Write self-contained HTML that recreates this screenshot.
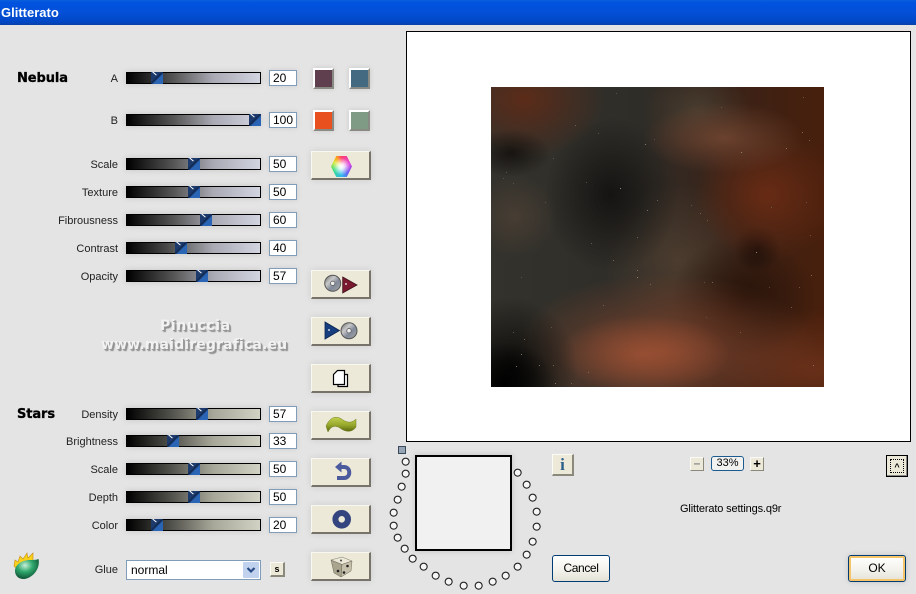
<!DOCTYPE html>
<html><head><meta charset="utf-8"><title>Glitterato</title>
<style>
html,body{margin:0;padding:0}
body{width:916px;height:594px;overflow:hidden;position:relative;background:#e4e4e4;font-family:"Liberation Sans",sans-serif;color:#000}
div{position:absolute;box-sizing:border-box}
.title{left:0;top:0;width:916px;height:25px;background:linear-gradient(#0a5fdc 0,#0052e0 3px,#0450d8 12px,#0047c4 22px,#0a3fa8 25px);color:#fff;font-weight:bold;font-size:13px;line-height:25px;padding-left:1px}
.l{width:110px;left:8px;text-align:right;font-size:11px;line-height:14px;height:14px;color:#222}
.h{left:17px;font-family:"DejaVu Sans",sans-serif;font-weight:bold;font-size:13px;line-height:16px;color:#000;letter-spacing:-.1px;-webkit-text-stroke:.3px #000}
.b{left:126px;width:135px;height:12px;border:1px solid #000;box-shadow:0 0 7px rgba(0,0,0,.13)}
.n{background:linear-gradient(90deg,#000 0,#555 35%,#a9aab4 65%,#d2d4e0 100%)}
.s{background:linear-gradient(90deg,#000 0,#565650 35%,#a8a89a 65%,#d2d2c4 100%)}
.t{top:-1px;width:12px;height:12px;background:linear-gradient(135deg,#1c3a6c 0,#1c3a6c 40%,#10264c 50%,#2a64b4 60%,#2a64b4 100%)}
.t:before{content:"";position:absolute;left:1px;top:1px;width:5px;height:1px;background:#fff;transform:rotate(40deg)}
.i{left:269px;width:28px;height:16px;background:#fff;border:1px solid #7f9db9;font-size:12px;line-height:15px;padding-left:3px;box-shadow:0 0 6px rgba(0,0,0,.1)}
.c{width:21px;height:21px;border:2px solid;border-color:#fff #8a8a84 #8a8a84 #fff;box-shadow:0 0 5px rgba(0,0,0,.12)}
.btn{left:311px;width:60px;height:29px;background:#ece9d8;border:1px solid;border-color:#f8f7f0 #77736a #77736a #f8f7f0;border-bottom-width:2px;border-right-width:2px;box-shadow:0 0 7px rgba(0,0,0,.1)}
.wm{color:#f2f2f2;font-family:"DejaVu Sans",sans-serif;font-weight:bold;white-space:nowrap;text-shadow:1px 1px 0 #9a9a9a,2px 2px 1px #8a8a8a}
.push{background:linear-gradient(#fff,#f2f1ea 60%,#e4e2d6);border:1px solid #003c74;border-radius:3px;font-size:11px;text-align:center;line-height:25px}
.sm{background:#ece9d8;border:1px solid;border-color:#fbfaf4 #8b887c #8b887c #fbfaf4;text-align:center}
.neb{left:491px;top:87px;width:333px;height:300px;overflow:hidden;background:
radial-gradient(ellipse 16% 14% at 4% 99%,rgba(0,0,0,1),rgba(0,0,0,0)),
radial-gradient(ellipse 20% 24% at 6% 94%,rgba(4,4,3,.85),rgba(4,4,3,0)),
radial-gradient(ellipse 26% 13% at 46% 89%,rgba(160,82,52,.8),rgba(160,80,48,0)),
radial-gradient(ellipse 46% 26% at 52% 88%,rgba(130,68,44,.9),rgba(120,62,40,0)),
radial-gradient(ellipse 24% 12% at 70% 17%,rgba(112,68,48,.9),rgba(100,60,40,0)),
radial-gradient(ellipse 22% 22% at 83% 36%,rgba(108,44,20,.9),rgba(100,40,20,0)),
radial-gradient(ellipse 7% 8% at 80% 54%,rgba(22,12,8,.8),rgba(20,10,6,0)),
radial-gradient(ellipse 22% 20% at 76% 70%,rgba(38,18,8,.9),rgba(36,18,10,0)),
radial-gradient(ellipse 20% 26% at 36% 36%,rgba(16,15,14,.85),rgba(14,13,12,0)),
radial-gradient(ellipse 13% 14% at 7% 43%,rgba(80,66,54,.7),rgba(80,60,48,0)),
radial-gradient(ellipse 12% 8% at 6% 22%,rgba(14,10,8,.75),rgba(14,10,8,0)),
radial-gradient(ellipse 24% 20% at 10% 4%,rgba(96,42,22,.9),rgba(80,36,20,0)),
radial-gradient(ellipse 22% 26% at 56% 58%,rgba(78,62,48,.9),rgba(70,56,44,0)),
radial-gradient(ellipse 16% 14% at 62% 8%,rgba(76,66,52,.8),rgba(70,60,48,0)),
radial-gradient(ellipse 28% 20% at 97% 94%,rgba(110,50,26,.85),rgba(100,46,24,0)),
linear-gradient(90deg,#33322c 0,#2f2d28 45%,#3a2217 72%,#481f0c 100%)}
.st{left:0;top:0;width:1px;height:1px;background:transparent;box-shadow:
125px 6px #5c5448,250px 65px #8c806e,154px 57px #857868,129px 101px #988a74,62px 71px #5c5448,95px 95px #585044,
22px 96px #5c5246,15px 85px #5c5246,156px 123px #7a6e5c,209px 126px #6e6254,216px 133px #685c4e,146px 150px #6e6254,
146px 183px #7a6e5c,146px 190px #908270,100px 156px #60564a,122px 173px #726656,265px 165px #908270,320px 188px #7c6854,
319px 148px #6c5646,315px 115px #6c5646,295px 61px #887460,311px 45px #7c6854,318px 53px #7c6854,221px 195px #6e6254,
213px 195px #5c5246,159px 197px #6e6254,112px 218px #726656,249px 245px #705e4e,22px 245px #5c5246,33px 252px #6e6254,
30px 267px #807260,25px 279px #807260,48px 278px #746856,62px 278px #6e6254,97px 285px #7c6c5c,64px 296px #887a68,
80px 296px #6e6254,322px 278px #887460,12px 91px #5c5246,84px 38px #6e6254,107px 46px #5c5246,163px 52px #5c5246,
200px 118px #5c5246,308px 200px #6c5646,166px 113px #6e6254,54px 115px #5c5246,215px 230px #605244,280px 120px #6c5646,
300px 220px #6c5646,30px 190px #5c5246,60px 240px #5c5246,230px 20px #5c5246,312px 10px #6c5646,278px 200px #5c4638}
.hex{left:331px;top:156px;width:21px;height:21px;clip-path:polygon(25% 0,75% 0,100% 50%,75% 100%,25% 100%,0 50%);background:radial-gradient(circle,#fff 0,rgba(255,255,255,.85) 18%,rgba(255,255,255,0) 60%),conic-gradient(#ff3c6e 0deg,#e040e0 70deg,#6a50f0 130deg,#30b8f0 180deg,#30e080 245deg,#d8e830 300deg,#ff9a20 335deg,#ff3c6e 360deg)}
</style></head><body>
<div class="title">Glitterato</div>

<div class="h" style="top:71px">Nebula</div>
<div class="h" style="top:407px">Stars</div>

<div class="l" style="top:72px">A</div>
<div class="l" style="top:114px">B</div>
<div class="l" style="top:158px">Scale</div>
<div class="l" style="top:186px">Texture</div>
<div class="l" style="top:214px">Fibrousness</div>
<div class="l" style="top:242px">Contrast</div>
<div class="l" style="top:270px">Opacity</div>
<div class="l" style="top:408px">Density</div>
<div class="l" style="top:435px">Brightness</div>
<div class="l" style="top:463px">Scale</div>
<div class="l" style="top:491px">Depth</div>
<div class="l" style="top:519px">Color</div>
<div class="l" style="top:563px">Glue</div>

<div class="b n" style="top:72px"><div class="t" style="left:24px"></div></div>
<div class="b n" style="top:114px"><div class="t" style="left:122px"></div></div>
<div class="b n" style="top:158px"><div class="t" style="left:61px"></div></div>
<div class="b n" style="top:186px"><div class="t" style="left:61px"></div></div>
<div class="b n" style="top:214px"><div class="t" style="left:73px"></div></div>
<div class="b n" style="top:242px"><div class="t" style="left:48px"></div></div>
<div class="b n" style="top:270px"><div class="t" style="left:69px"></div></div>
<div class="b s" style="top:408px"><div class="t" style="left:69px"></div></div>
<div class="b s" style="top:435px"><div class="t" style="left:40px"></div></div>
<div class="b s" style="top:463px"><div class="t" style="left:61px"></div></div>
<div class="b s" style="top:491px"><div class="t" style="left:61px"></div></div>
<div class="b s" style="top:519px"><div class="t" style="left:24px"></div></div>

<div class="i" style="top:70px">20</div>
<div class="i" style="top:112px">100</div>
<div class="i" style="top:156px">50</div>
<div class="i" style="top:184px">50</div>
<div class="i" style="top:212px">60</div>
<div class="i" style="top:240px">40</div>
<div class="i" style="top:268px">57</div>
<div class="i" style="top:406px">57</div>
<div class="i" style="top:433px">33</div>
<div class="i" style="top:461px">50</div>
<div class="i" style="top:489px">50</div>
<div class="i" style="top:517px">20</div>

<div class="c" style="left:313px;top:68px;background:#5f3f4e"></div>
<div class="c" style="left:349px;top:68px;background:#436a80"></div>
<div class="c" style="left:313px;top:110px;background:#e8501f"></div>
<div class="c" style="left:349px;top:110px;background:#7f9a85"></div>

<div class="btn" style="top:151px"></div>
<div class="btn" style="top:270px"></div>
<div class="btn" style="top:317px"></div>
<div class="btn" style="top:364px"></div>
<div class="btn" style="top:411px"></div>
<div class="btn" style="top:458px"></div>
<div class="btn" style="top:505px"></div>
<div class="btn" style="top:552px"></div>
<div class="hex"></div>

<div class="wm" style="left:160px;top:318px;font-size:14px;letter-spacing:.6px">Pinuccia</div>
<div class="wm" style="left:101px;top:337px;font-size:14px;letter-spacing:.15px">www.maidiregrafica.eu</div>

<div style="left:406px;top:31px;width:505px;height:411px;background:#fff;border:1px solid #000"></div>
<div class="neb"><div class="st"></div></div>

<div style="left:415px;top:455px;width:97px;height:96px;background:#f1f1f1;border:2px solid #000;box-shadow:0 0 6px rgba(0,0,0,.15)"></div>
<div style="left:398px;top:446px;width:8px;height:8px;background:#97a6b4;border:1px solid #3a4a5a"></div>

<svg style="position:absolute;left:385px;top:440px" width="240" height="154" viewBox="0 0 720 462">
<g fill="#f6f6f6" stroke="#222" stroke-width="3.400">
<circle cx="62" cy="65" r="10.500"/><circle cx="62" cy="101" r="10.500"/><circle cx="50" cy="140" r="10.500"/><circle cx="38" cy="179" r="10.500"/><circle cx="26" cy="218" r="10.500"/><circle cx="26" cy="257" r="10.500"/><circle cx="38" cy="293" r="10.500"/><circle cx="59" cy="326" r="10.500"/><circle cx="83" cy="356" r="10.500"/><circle cx="116" cy="380" r="10.500"/><circle cx="152" cy="407" r="10.500"/><circle cx="191" cy="425" r="10.500"/><circle cx="236" cy="437" r="10.500"/><circle cx="281" cy="437" r="10.500"/><circle cx="323" cy="425" r="10.500"/><circle cx="362" cy="407" r="10.500"/><circle cx="398" cy="380" r="10.500"/><circle cx="425" cy="344" r="10.500"/><circle cx="443" cy="305" r="10.500"/><circle cx="455" cy="260" r="10.500"/><circle cx="455" cy="215" r="10.500"/><circle cx="443" cy="173" r="10.500"/><circle cx="425" cy="134" r="10.500"/><circle cx="398" cy="98" r="10.500"/>
</g></svg>

<div class="sm" style="left:552px;top:454px;width:22px;height:22px;font:bold 17px/20px 'Liberation Serif',serif;color:#2c5f8c;border-right-width:2px;border-bottom-width:2px">i</div>
<div class="push" style="left:552px;top:555px;width:58px;height:27px;font-size:12px;letter-spacing:-.4px">Cancel</div>
<div class="push" style="left:848px;top:555px;width:58px;height:27px;font-size:12px;box-shadow:inset 0 0 0 2px #f6c56a,0 0 6px rgba(0,0,0,.15)">OK</div>

<div class="sm" style="left:690px;top:457px;width:14px;height:14px;font:bold 12px/11px 'Liberation Sans',sans-serif;color:#888">&#8211;</div>
<div style="left:711px;top:456px;width:33px;height:15px;background:#f2f2f0;border:1px solid #1b5b8f;border-radius:3px;font-size:11px;line-height:13px;text-align:center">33%</div>
<div class="sm" style="left:750px;top:457px;width:14px;height:14px;font:bold 13px/12px 'Liberation Sans',sans-serif">+</div>
<div style="left:886px;top:455px;width:22px;height:22px;background:#ece9d8;border:1px solid #000;box-shadow:inset -1px -1px 0 #888"><div style="left:3px;top:3px;width:14px;height:14px;border:1px dotted #000;font:bold 9px/14px 'Liberation Sans',sans-serif;text-align:center">^</div></div>
<div style="left:680px;top:502px;font-size:11px;line-height:14px;white-space:nowrap;letter-spacing:-.14px">Glitterato settings.q9r</div>

<div style="left:126px;top:560px;width:135px;height:20px;background:#fff;border:1px solid #7f9db9;font-size:12px;line-height:18px;padding-left:4px">normal
<div style="right:1px;top:1px;width:16px;height:16px;background:#c1d2ee;border-radius:1px"><svg width="16" height="16" style="position:absolute;left:0;top:0"><path d="M4.5 6 L8 9.5 L11.5 6" fill="none" stroke="#2a4a86" stroke-width="2.2"/></svg></div></div>
<div class="sm" style="left:270px;top:562px;width:15px;height:15px;font:bold 9px/12px 'Liberation Sans',sans-serif;border-right-width:2px;border-bottom-width:2px">s</div>

<svg style="position:absolute;left:0;top:0" width="916" height="594" viewBox="0 0 916 594">
<defs>
<linearGradient id="cd" x1="0" y1="0" x2="1" y2="1"><stop offset="0" stop-color="#666"/><stop offset=".35" stop-color="#c8c8c8"/><stop offset=".6" stop-color="#808898"/><stop offset="1" stop-color="#aaa"/></linearGradient>
<linearGradient id="wv" x1="0" y1="0" x2="0" y2="1"><stop offset="0" stop-color="#c4d050"/><stop offset=".55" stop-color="#94a62a"/><stop offset="1" stop-color="#56620e"/></linearGradient>
<radialGradient id="egg" cx=".42" cy=".32" r=".72"><stop offset="0" stop-color="#c8f0d8"/><stop offset=".45" stop-color="#2fa86c"/><stop offset="1" stop-color="#0c4a30"/></radialGradient>
</defs>
<circle cx="332.700" cy="283.300" r="8" fill="url(#cd)" stroke="#555"/><circle cx="332.700" cy="283.300" r="2.200" fill="#eee" stroke="#555" stroke-width=".7"/>
<path d="M342.700 277 L357 285 L342.700 293 Z" fill="#7a1830" stroke="#3a1018" stroke-width=".8"/><circle cx="346" cy="284" r=".9" fill="#fff"/>
<path d="M325 322 L339.500 330.500 L325 339 Z" fill="#173f80" stroke="#0c2450" stroke-width=".8"/><circle cx="329" cy="330" r=".9" fill="#fff"/>
<circle cx="349" cy="330.700" r="8" fill="url(#cd)" stroke="#555"/><circle cx="349" cy="330.700" r="2.200" fill="#eee" stroke="#555" stroke-width=".7"/>
<path d="M338 374.500 H347.500 V386.500 H338 Z" fill="#fff" stroke="#000" stroke-width="1.200"/>
<path d="M337.500 370.500 H344.500 V384.500 H333.500 V374.500 Z" fill="#fff" stroke="#000" stroke-width="1.200"/>
<path d="M326 426 C331 415 338 416 343 420 C348 423 352 423 356 419 V427 C352 433 345 432 340 428 C335 425 331 426 328 432 Z" fill="url(#wv)" stroke="#6d7a20" stroke-width=".5"/>
<path d="M340 467 H344 C351 467 351 478 344 478 H337" fill="none" stroke="#4a5a9c" stroke-width="4"/>
<path d="M335 467 L341.500 461.500 V472.500 Z" fill="#4a5a9c"/>
<circle cx="341.700" cy="519.300" r="6.300" fill="none" stroke="#34447e" stroke-width="6"/>
<path d="M331 560 L342 557 L352 561 L342 564.500 Z" fill="#ece8d8" stroke="#7c7868" stroke-width=".5"/>
<path d="M331 560 L342 564.500 L341 577 L334 573 Z" fill="#a8a48e" stroke="#6c6858" stroke-width=".5"/>
<path d="M342 564.500 L352 561 L351 571 L341 577 Z" fill="#c4c0aa" stroke="#6c6858" stroke-width=".5"/>
<circle cx="347.500" cy="566" r="1.300" fill="#222"/><circle cx="344" cy="572.500" r="1.300" fill="#222"/><circle cx="341" cy="560.500" r="1" fill="#444"/><circle cx="338" cy="571" r="1.300" fill="#222"/>
<path d="M14 566 L15 560 L18 562 L20 556 L23 559 L27 553 L28 558 L33 553 L33 560 L22 563 L17 569 Z" fill="#f7d21c" stroke="#c88a10" stroke-width=".6"/>
<path d="M38.500 559 C40 565 37 574 28 578 C21 581 15 577 15 571 C15 564 23 560 30 560 C33 560 36 560 38.500 559 Z" fill="url(#egg)"/>
</svg>
</body></html>
